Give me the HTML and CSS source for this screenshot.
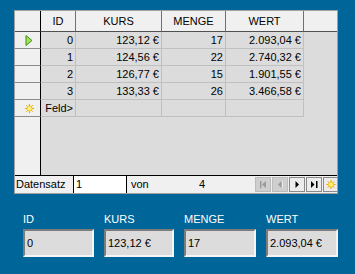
FILE: index.html
```html
<!DOCTYPE html>
<html lang="de">
<head>
  <meta charset="UTF-8">
  <title>Kurse</title>
  <link rel="stylesheet" href="styles.css">
</head>
<body>
  <div class="frame">
    <div class="grid">
      <div class="cell corner"></div>
      <div class="cell head">ID</div>
      <div class="cell head">KURS</div>
      <div class="cell head">MENGE</div>
      <div class="cell head">WERT</div>
      <div class="cell head last"></div>

      <div class="cell rowhead">
        <svg width="8" height="11" viewBox="0 0 8 11"><polygon points="1,0.5 7,5.5 1,10.5" fill="#a6e05a" stroke="#3a9418" stroke-width="1"/></svg>
      </div>
      <div class="cell num">0</div>
      <div class="cell num">123,12 €</div>
      <div class="cell num">17</div>
      <div class="cell num">2.093,04 €</div>
      <div class="cell blank"></div>

      <div class="cell rowhead"></div>
      <div class="cell num">1</div>
      <div class="cell num">124,56 €</div>
      <div class="cell num">22</div>
      <div class="cell num">2.740,32 €</div>
      <div class="cell blank"></div>

      <div class="cell rowhead"></div>
      <div class="cell num">2</div>
      <div class="cell num">126,77 €</div>
      <div class="cell num">15</div>
      <div class="cell num">1.901,55 €</div>
      <div class="cell blank"></div>

      <div class="cell rowhead"></div>
      <div class="cell num">3</div>
      <div class="cell num">133,33 €</div>
      <div class="cell num">26</div>
      <div class="cell num">3.466,58 €</div>
      <div class="cell blank"></div>

      <div class="cell rowhead">
        <svg width="9" height="9" viewBox="0 0 9 9">
          <g stroke="#f0a000" stroke-width="1">
            <line x1="4.5" y1="0" x2="4.5" y2="9"/>
            <line x1="0" y1="4.5" x2="9" y2="4.5"/>
            <line x1="1.3" y1="1.3" x2="7.7" y2="7.7"/>
            <line x1="7.7" y1="1.3" x2="1.3" y2="7.7"/>
          </g>
          <circle cx="4.5" cy="4.5" r="2.6" fill="#fff27a" stroke="#f5b800" stroke-width="0.8"/>
        </svg>
      </div>
      <div class="cell num">Feld&gt;</div>
      <div class="cell num"></div>
      <div class="cell num"></div>
      <div class="cell num"></div>
      <div class="cell blank"></div>

      <div class="cell rowhead rest"></div>
      <div class="cell rest-area"></div>
    </div>

    <div class="navbar">
      <span class="nav-label">Datensatz</span>
      <span class="nav-input">1</span>
      <span class="nav-of">von</span>
      <span class="nav-total">4</span>
      <div class="nav-buttons">
        <span class="nav-btn off">
          <svg width="14" height="13" viewBox="0 0 14 13"><rect x="4" y="3" width="1.5" height="7" fill="#9a9a9a"/><polygon points="10,3 6,6.5 10,10" fill="#9a9a9a"/></svg>
        </span>
        <span class="nav-btn off">
          <svg width="14" height="13" viewBox="0 0 14 13"><polygon points="8.5,3 5,6.5 8.5,10" fill="#9a9a9a"/><rect x="9" y="3" width="1" height="7" fill="#e8e8e8"/></svg>
        </span>
        <span class="nav-btn">
          <svg width="14" height="13" viewBox="0 0 14 13"><polygon points="5.5,3 9,6.5 5.5,10" fill="#000"/></svg>
        </span>
        <span class="nav-btn">
          <svg width="14" height="13" viewBox="0 0 14 13"><polygon points="4,3 7.5,6.5 4,10" fill="#000"/><rect x="9" y="3" width="1.5" height="7" fill="#000"/></svg>
        </span>
        <span class="nav-btn last">
          <svg width="12" height="13" viewBox="0 0 12 13">
            <g stroke="#f0a000" stroke-width="1">
              <line x1="6" y1="2" x2="6" y2="11"/>
              <line x1="1.5" y1="6.5" x2="10.5" y2="6.5"/>
              <line x1="2.8" y1="3.3" x2="9.2" y2="9.7"/>
              <line x1="9.2" y1="3.3" x2="2.8" y2="9.7"/>
            </g>
            <circle cx="6" cy="6.5" r="2.6" fill="#fff27a" stroke="#f5b800" stroke-width="0.8"/>
          </svg>
        </span>
      </div>
    </div>
  </div>

  <div class="fields">
    <div class="field w-id">
      <div class="field-label">ID</div>
      <div class="field-box">0</div>
    </div>
    <div class="field w-kurs">
      <div class="field-label">KURS</div>
      <div class="field-box">123,12 €</div>
    </div>
    <div class="field w-menge">
      <div class="field-label">MENGE</div>
      <div class="field-box">17</div>
    </div>
    <div class="field w-wert">
      <div class="field-label">WERT</div>
      <div class="field-box">2.093,04 €</div>
    </div>
  </div>
</body>
</html>
```

FILE: styles.css
```css
/* Reset */
* {
  margin: 0;
  padding: 0;
  box-sizing: border-box;
}

body {
  width: 355px;
  height: 274px;
  overflow: hidden;
  background-color: #006699;
  font-family: "Liberation Sans", Arial, sans-serif;
  font-size: 11px;
  color: #000;
}

/* Table control */
.frame {
  width: 324px;
  margin: 10px 0 0 14px;
  border: 1px solid #a0a0a0;
  background-color: #dcdcdc;
}

.grid {
  display: grid;
  grid-template-columns: 26px 35px 86px 64px 78px 33px;
  grid-template-rows: 21px repeat(5, 17px) 58px;
}

.cell {
  display: flex;
  align-items: center;
  white-space: nowrap;
  overflow: hidden;
}

.corner {
  background-color: #f0f0f0;
  border-right: 1px solid #000;
  border-bottom: 1px solid #505050;
}

.head {
  justify-content: center;
  background-color: #f0f0f0;
  border-right: 1px solid #707070;
  border-bottom: 1px solid #505050;
}

.head.last {
  border-right: none;
}

.rowhead {
  justify-content: center;
  padding-left: 3px;
  background-color: #f0f0f0;
  border-right: 1px solid #000;
  border-bottom: 1px solid #8c8c8c;
}

.rowhead.rest {
  border-bottom: none;
}

.num {
  justify-content: flex-end;
  padding-right: 2px;
  border-right: 1px solid #c0c0c0;
  border-bottom: 1px solid #c0c0c0;
}

.rest-area {
  grid-column: span 5;
}

/* Record navigation */
.navbar {
  display: flex;
  align-items: center;
  height: 18px;
  border-top: 1px solid #000;
  background-color: #f0f0f0;
  line-height: 17px;
}

.nav-label {
  width: 59px;
  height: 100%;
  padding-left: 1px;
  border-right: 1px solid #000;
}

.nav-input {
  width: 53px;
  height: 100%;
  padding-left: 2px;
  background-color: #fff;
  border-right: 1px solid #000;
}

.nav-of {
  width: 60px;
  padding-left: 4px;
}

.nav-total {
  width: 30px;
  text-align: center;
}

.nav-buttons {
  display: flex;
  gap: 1px;
  margin-left: auto;
}

.nav-btn {
  display: flex;
  align-items: center;
  justify-content: center;
  width: 16px;
  height: 15px;
  border: 1px solid #8a8a8a;
  background-color: #ececec;
}

.nav-btn.off {
  border-color: #bcbcbc;
  background-color: #cfcfcf;
}

.nav-btn.last {
  width: 14px;
  border-right: none;
}

/* Single record fields */
.fields {
  display: flex;
  gap: 10px;
  margin: 19px 0 0 23px;
}

.field-label {
  color: #fff;
  line-height: 13px;
  margin-bottom: 3px;
}

.field-box {
  display: flex;
  align-items: center;
  height: 28px;
  padding-left: 2px;
  background-color: #dcdcdc;
  border-style: solid;
  border-width: 2px;
  border-color: #7c7c7c #f4f4f4 #f4f4f4 #7c7c7c;
}

.w-id { width: 71px; }
.w-kurs { width: 70px; }
.w-menge { width: 72px; }
.w-wert { width: 72px; }
```
